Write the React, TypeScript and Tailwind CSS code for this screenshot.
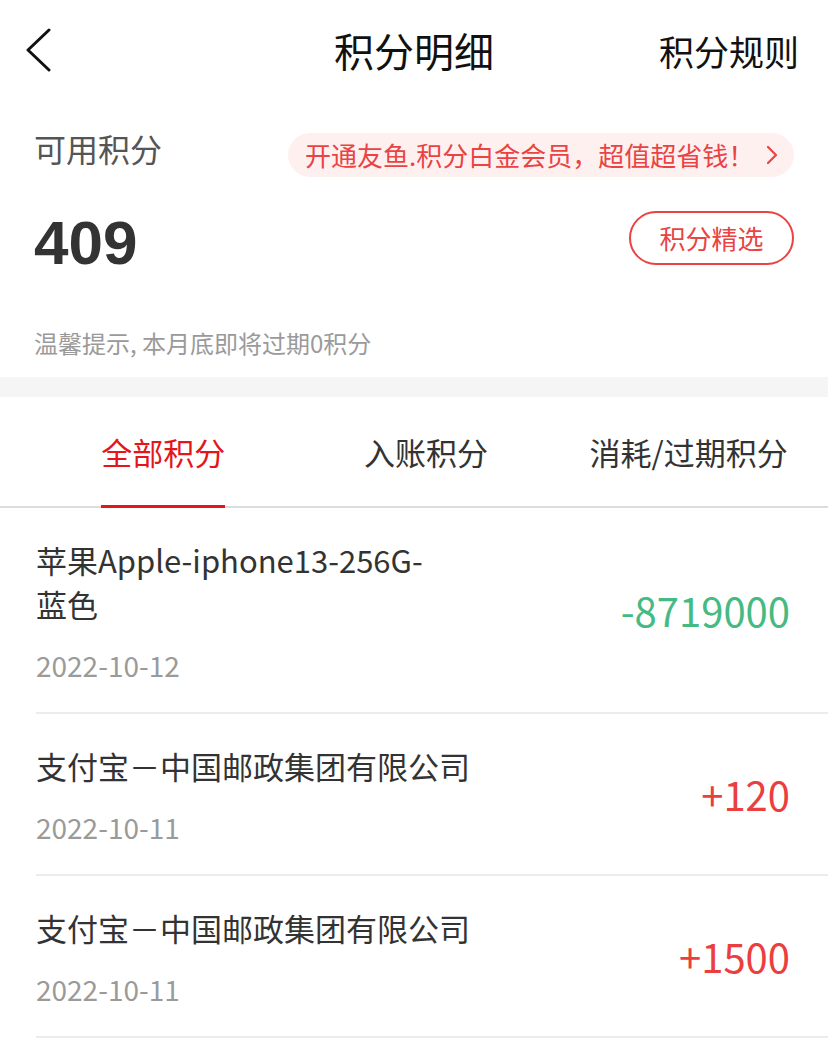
import React from "react";

const CJK = { fontFamily: '"Noto Sans CJK SC", "Noto Sans", sans-serif' };

const RECORDS = [
  { title: "苹果Apple-iphone13-256G-蓝色", date: "2022-10-12", amount: "-8719000", out: true },
  { title: "支付宝－中国邮政集团有限公司", date: "2022-10-11", amount: "+120", out: false },
  { title: "支付宝－中国邮政集团有限公司", date: "2022-10-11", amount: "+1500", out: false },
];

const TABS = ["全部积分", "入账积分", "消耗/过期积分"];

function BackIcon() {
  return (
    <svg width="28" height="44" viewBox="0 0 28 44" fill="none">
      <path d="M25 2 L4 22 L25 42" stroke="#111" strokeWidth="3" strokeLinecap="round" strokeLinejoin="round" />
    </svg>
  );
}

function SmallChevron() {
  return (
    <svg width="14" height="20" viewBox="0 0 14 20" fill="none">
      <path d="M3 2 L11 10 L3 18" stroke="#e94343" strokeWidth="2.2" strokeLinecap="round" strokeLinejoin="round" />
    </svg>
  );
}

export default function App() {
  return (
    <div className="min-h-[1044px] w-[828px] bg-white text-[#333]" style={CJK}>
      {/* top bar */}
      <header className="grid h-[100px] grid-cols-[1fr_auto_1fr] items-center">
        <div className="pl-[24px]">
          <BackIcon />
        </div>
        <h1 className="text-[40px] leading-none text-[#111]">积分明细</h1>
        <div className="flex justify-end pr-[29px] text-[35px] leading-none text-[#111]">积分规则</div>
      </header>

      {/* summary */}
      <section className="px-[34px] pb-[18px]">
        <div className="mt-[33px] flex h-[44px] items-center justify-between">
          <span className="-mt-[14px] text-[32px] leading-none text-[#555]">可用积分</span>
          <div className="flex h-[44px] w-[506px] items-center justify-between rounded-full bg-[#fff0f0] pl-[17px] pr-[15px] text-[26px] leading-none text-[#e94343]">
            <span>开通友鱼.积分白金会员，超值超省钱！</span>
            <SmallChevron />
          </div>
        </div>
        <div className="mt-[34px] flex h-[53px] items-center justify-between">
          <span
            className="mt-[10px] text-[62px] font-bold leading-none text-[#333]"
            style={{ fontFamily: '"Liberation Sans", Arial, sans-serif' }}
          >
            409
          </span>
          <button
            type="button"
            className="flex h-[54px] w-[165px] items-center justify-center rounded-full border-2 border-[#e94343] text-[26px] leading-none text-[#e94343]"
          >
            积分精选
          </button>
        </div>
        <p className="mt-[63px] text-[24px] leading-[32px] text-[#9a9a9a]">温馨提示, 本月底即将过期0积分</p>
      </section>

      <div className="h-[20px] bg-[#f5f5f5]" />

      {/* tabs */}
      <nav className="grid h-[111px] grid-cols-3 border-b-2 border-[#dcdcdc] pl-[32px] pr-[8px]">
        {TABS.map((tab, i) => (
          <div key={tab} className="flex justify-center">
            <div
              className={`relative flex h-full items-center text-[31px] leading-none ${
                i === 0 ? "text-[#e3161b]" : "text-[#333]"
              }`}
            >
              {tab}
              {i === 0 && <span className="absolute -bottom-[2px] left-0 right-0 h-[3px] bg-[#e3161b]" />}
            </div>
          </div>
        ))}
      </nav>

      {/* records */}
      <ul>
        {RECORDS.map((r, i) => (
          <li key={i} className="ml-[36px] flex items-center justify-between border-b-2 border-[#ececec] pb-[31px] pr-[38px] pt-[30px]">
            <div>
              <p className="w-[438px] break-keep text-[31px] leading-[44px] text-[#333]">{r.title}</p>
              <p className="mt-[23px] text-[28px] leading-[32px] text-[#9a9a9a]">{r.date}</p>
            </div>
            <span className={`text-[40px] leading-none ${r.out ? "text-[#45ba82]" : "text-[#eb3f3f]"}`}>{r.amount}</span>
          </li>
        ))}
      </ul>
    </div>
  );
}
